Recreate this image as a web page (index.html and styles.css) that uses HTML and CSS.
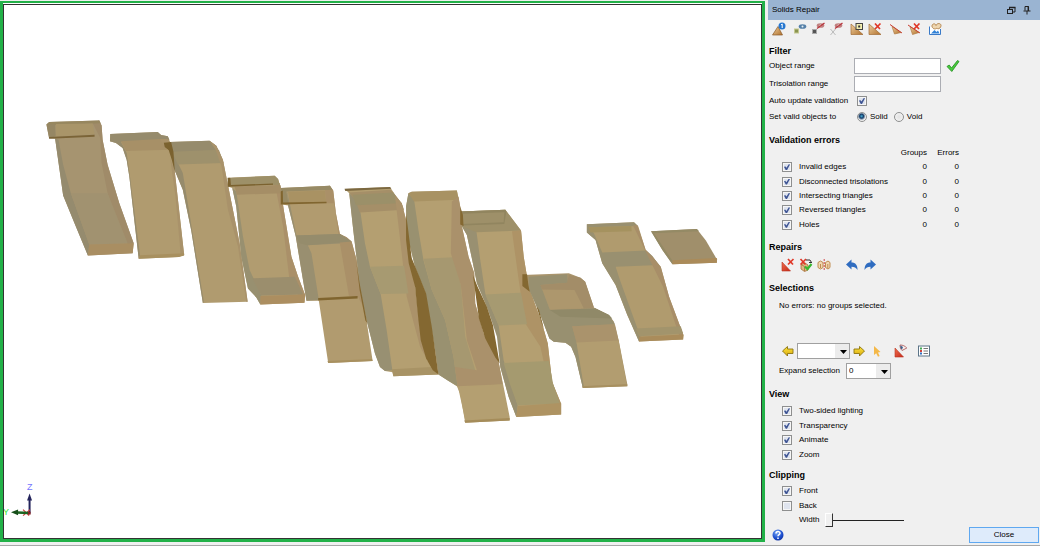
FILE: index.html
```html
<!DOCTYPE html>
<html lang="en">
<head>
<meta charset="utf-8">
<title>Solids Repair</title>
<link rel="stylesheet" href="styles.css">
</head>
<body>
<svg width="0" height="0" class="defs" aria-hidden="true">
  <defs>
    <linearGradient id="tan" x1="0" y1="0" x2="1" y2="1"><stop offset="0" stop-color="#efd0a0"/><stop offset="1" stop-color="#b0702c"/></linearGradient>
    <linearGradient id="gold" x1="0" y1="0" x2="0" y2="1"><stop offset="0" stop-color="#ffe640"/><stop offset="1" stop-color="#d9a90c"/></linearGradient>
    <linearGradient id="red" x1="0" y1="0" x2="1" y2="1"><stop offset="0" stop-color="#f07050"/><stop offset="1" stop-color="#c42818"/></linearGradient>
    <radialGradient id="ball" cx=".4" cy=".3" r=".8"><stop offset="0" stop-color="#7aa8f4"/><stop offset=".6" stop-color="#1d4fd0"/><stop offset="1" stop-color="#0b2a94"/></radialGradient>
    <g id="cross"><path d="M0 0L5 5.500M5.500 0L0 5.500" stroke="#e03828" stroke-width="1.700" fill="none"/></g>
    <g id="eye"><ellipse cx="3.500" cy="2.500" rx="3.800" ry="2.300"/><circle cx="3.500" cy="2.500" r="1" fill="#e8eef2"/></g>
    <g id="noeye" fill="#c08080"><ellipse cx="3.500" cy="2.500" rx="3.800" ry="2.300"/><circle cx="3.500" cy="2.500" r="1" fill="#eed"/><path d="M0 5.500L7.500 0" stroke="#b8343c" stroke-width="1.200"/></g>
  </defs>
</svg>
<div class="app">
  <main class="viewport">
    <svg class="scene" viewBox="4 4 757 534" role="img" aria-label="Solid model view">
      <g transform="translate(40 110) scale(.33333)">
        <path fill="#a69470" d="M22 45L30 37L180 33L187 48L190 90L205 165L240 280L283 400L280 430L146 437L110 350L72 257L48 87L30 86Z"/>
        <path fill="#958b6e" d="M48 87L58 90L72 165L95 250L150 404L146 437L110 350L72 257Z"/>
        <path fill="#a08b69" d="M160 40L180 33L187 48L190 90L205 165L240 280L283 400L265 402L230 320L205 250L187 160L183 85Z"/>
        <path fill="#a19270" d="M95 250L205 250L265 400L150 404Z"/>
        <path fill="#97875f" d="M22 45L30 37L180 33L184 41L28 48Z"/>
        <path fill="#968764" d="M22 45L48 43L50 80L30 86Z"/>
        <path fill="#a99569" d="M50 43L160 42L166 74L50 80Z"/>
        <path fill="#7b6437" d="M30 82L166 75L166 81L30 87Z"/>
        <path fill="#a98e62" d="M150 404L283 400L280 430L146 437Z"/>

        <path fill="#b09b6f" d="M212 95L213 73L355 67L365 76L385 80L397 110L406 185L434 435L418 441L298 446L270 200L262 150L250 115L230 100Z"/>
        <path fill="#968b6c" d="M212 95L213 73L355 67L365 76L385 80L390 90L245 97L262 130L272 200L302 436L298 446L270 200L262 150L250 115L230 100Z"/>
        <path fill="#a79067" d="M245 95L360 88L383 93L392 120L260 124Z"/>
        <path fill="#a9926a" d="M360 88L385 88L397 110L406 185L434 435L424 438L408 260L390 130Z"/>
        <path fill="#a8905f" d="M302 436L434 430L434 437L418 441L298 446Z"/>

        <path fill="#b09b6f" d="M375 100L390 97L510 93L530 108L550 150L560 200L600 400L624 575L490 579L455 360L430 240L405 180Z"/>
        <path fill="#968b6c" d="M390 97L510 93L530 108L538 125L400 128L430 190L448 300L493 575L490 579L455 360L430 240L405 180L392 120Z"/>
        <path fill="#9e916c" d="M398 126L538 120L552 160L415 164Z"/>
        <path fill="#a9926a" d="M510 93L530 108L550 150L560 200L600 400L624 575L620 575L595 410L565 300L546 170L528 120Z"/>
        <path fill="#7b622f" d="M373 99L395 97L402 126L406 185L397 150L388 122L376 112Z"/>
      </g>
      <g transform="translate(220 160) scale(.33333)">
        <path fill="#b19c70" d="M25 55L40 53L165 48L175 58L182 80L192 150L215 290L235 350L256 405L254 428L122 433L110 412L85 385L65 290L50 140L38 85L25 80Z"/>
        <path fill="#989070" d="M38 85L50 95L70 230L90 330L125 405L122 433L110 412L85 385L65 290L50 140Z"/>
        <path fill="#aa9069" d="M165 70L180 70L192 150L215 290L235 350L256 405L235 405L208 350L190 200Z"/>
        <path fill="#9d9068" d="M25 55L165 48L175 58L180 75L25 80Z"/>
        <path fill="#a58e66" d="M45 80L182 76L187 100L52 105Z"/>
        <path fill="#9b8e6d" d="M98 355L225 350L250 403L125 406Z"/>
        <path fill="#ac8e60" d="M122 408L256 403L254 428L122 433Z"/>
        <path fill="#7b622f" d="M24 54L32 54L34 76L160 71L160 75L25 81Z"/>

        <path fill="#b19b6f" d="M183 85L330 78L340 92L348 160L360 222L380 232L395 245L410 300L435 450L458 602L325 608L297 422L260 422L228 230L205 137L183 133Z"/>
        <path fill="#998f70" d="M200 86L205 125L205 137L228 230L260 422L297 420L275 280L264 256L390 249L385 238L360 222L230 227L212 140Z"/>
        <path fill="#aa9068" d="M315 80L330 78L340 92L348 160L360 222L380 232L395 245L410 300L435 450L414 410L387 407L360 250L342 130L318 130Z"/>
        <path fill="#958c6c" d="M228 227L360 222L395 245L264 256L240 250Z"/>
        <path fill="#978a65" d="M183 85L330 78L338 90L200 95L206 130L185 133Z"/>
        <path fill="#a99263" d="M205 96L315 92L319 128L210 130Z"/>
        <path fill="#80652f" d="M183 95L189 92L190 128L320 126L320 130L183 134ZM295 414L413 408L413 415L295 421Z"/>
        <path fill="#a8905f" d="M323 602L456 596L458 602L325 608Z"/>
      </g>
      <g transform="translate(340 170) scale(.33333)">
        <path fill="#b49f71" d="M15 58L150 52L165 75L185 100L198 150L205 230L220 290L225 350L240 480L262 570L295 613L160 618L158 606L135 602L120 590L105 550L80 450L60 350L40 180L28 70Z"/>
        <path fill="#989072" d="M28 70L50 90L62 130L75 220L90 290L122 372L140 480L157 600L135 602L120 590L105 550L80 450L60 350L40 180Z"/>
        <path fill="#a58f68" d="M28 68L152 60L165 75L185 100L192 120L60 128L45 90Z"/>
        <path fill="#9b9069" d="M38 75L160 68L178 100L48 106Z"/>
        <path fill="#ab926a" d="M165 80L185 100L198 150L205 230L220 290L225 350L240 480L262 570L240 530L200 380L185 250Z"/>
        <path fill="#a79a71" d="M90 290L192 287L205 370L122 372Z"/>
        <path fill="#a89365" d="M155 597L275 590L295 613L160 618Z"/>
        <path fill="#7b6840" d="M14 57L150 52L154 57L16 64Z"/>

        <path fill="#b49f71" d="M205 70L215 66L350 62L360 110L365 170L385 260L402 310L405 400L430 490L475 575L508 740L508 750L375 757L360 670L350 648L295 613L285 540L270 450L255 365L225 290L200 190L198 110Z"/>
        <path fill="#999170" d="M205 70L222 90L235 180L250 270L275 360L315 450L340 560L352 648L325 632L295 613L285 540L270 450L255 365L225 290L200 190L198 110Z"/>
        <path fill="#a89263" d="M205 70L215 66L350 62L355 90L222 95Z"/>
        <path fill="#a69870" d="M250 266L340 262L362 345L375 500L405 600L345 600L340 560L315 450L275 360Z"/>
        <path fill="#aa916b" d="M335 95L355 80L360 110L365 170L385 260L402 310L405 400L430 490L475 575L487 642L352 648L344 590L410 600L380 510L362 345L332 250Z"/>
        <path fill="#b49f71" d="M354 652L486 642L505 742L375 749Z"/>
        <path fill="#a58c5a" d="M372 750L508 743L508 750L375 757Z"/>
        <path fill="#846831" d="M198 130L215 265L238 320L258 370L275 470L295 613L278 600L258 565L242 510L235 450L225 350L206 280L198 210Z"/>
        <path fill="#846831" d="M49 275L60 345L82 460L76 450L59 360Z"/>
      </g>
      <g transform="translate(460 200) scale(.33333)">
        <path fill="#b49f71" d="M0 35L135 30L182 92L190 170L205 260L245 370L262 430L275 545L302 610L302 642L168 650L145 590L120 500L115 410L80 320L50 250L38 190L20 105L5 80Z"/>
        <path fill="#999071" d="M5 78L48 90L60 180L75 280L115 375L130 480L172 615L168 650L145 590L120 500L110 410L80 320L50 250L38 190L20 105Z"/>
        <path fill="#9e9069" d="M0 35L135 30L182 92L50 97L5 80Z"/>
        <path fill="#91855f" d="M0 35L135 30L138 36L132 72L5 77L5 72L130 67L132 37L5 42Z"/>
        <path fill="#ae9366" d="M155 94L182 92L190 170L205 260L245 370L262 430L275 545L302 610L280 610L260 530L240 440L195 370L175 240Z"/>
        <path fill="#a69a71" d="M75 283L182 278L200 372L115 376Z"/>
        <path fill="#a59a6f" d="M130 488L265 482L278 550L298 610L172 615L150 555Z"/>
        <path fill="#ae9362" d="M172 617L302 608L302 642L168 650Z"/>
        <path fill="#846831" d="M0 20L8 45L10 78L0 74ZM38 225L52 260L80 320L98 375L118 490L105 472L75 415L56 355Z"/>

        <path fill="#aa956d" d="M187 225L325 220L360 233L374 245L400 322L445 345L460 365L475 425L500 552L500 558L367 563L345 470L332 440L315 428L280 425L267 415L240 345L205 265L187 258Z"/>
        <path fill="#989070" d="M205 230L320 223L322 248L240 255L262 300L270 330L405 325L445 345L463 372L335 378L350 435L370 557L367 563L345 470L332 440L315 428L280 425L267 415L240 345L205 265Z"/>
        <path fill="#ad976d" d="M243 262L345 256L370 324L268 328Z"/>
        <path fill="#a38d68" d="M240 255L320 248L325 225L360 233L374 245L400 322L370 325L342 270L245 268Z"/>
        <path fill="#908968" d="M268 330L405 325L445 345L455 355L300 350Z"/>
        <path fill="#aa936c" d="M335 378L463 372L475 425L350 430Z"/>
        <path fill="#b29d70" d="M348 427L474 421L498 552L370 557Z"/>
        <path fill="#a8905f" d="M365 558L500 552L500 558L367 563Z"/>
        <path fill="#846831" d="M186 223L200 223L204 255L208 275L186 258ZM228 318L236 330L250 384L244 370Z"/>

        <path fill="#b09b6e" d="M379 73L520 67L533 80L555 150L575 170L600 200L625 290L668 405L667 418L535 424L500 345L465 255L425 190L405 120L379 98Z"/>
        <path fill="#999070" d="M379 73L520 67L532 78L385 82L400 100L425 158L557 152L575 168L595 195L465 200L478 240L540 412L535 424L500 345L465 255L425 190L405 120L379 98Z"/>
        <path fill="#a5925f" d="M383 82L512 78L513 94L390 98Z"/>
        <path fill="#a88e68" d="M517 76L530 76L555 150L575 170L600 200L625 290L668 405L655 405L607 260L560 165Z"/>
        <path fill="#a2946c" d="M525 385L660 378L667 400L535 408Z"/>
        <path fill="#aa8c5b" d="M535 410L668 403L667 418L535 424Z"/>

        <path fill="#a08f6b" d="M571 94L708 87L735 122L768 178L768 188L635 193L605 150Z"/>
        <path fill="#948a65" d="M571 94L708 87L715 94L580 100L636 184L635 193L605 150Z"/>
        <path fill="#ab8b59" d="M635 181L768 174L768 188L635 193Z"/>
      </g>
      <path stroke="#24245c" stroke-width="2" d="M30.500 513V498"/>
      <path fill="#24245c" d="M30.500 493L33 500H28Z"/>
      <path stroke="#d04040" stroke-width="1.200" fill="none" d="M24 509L30 515M24 515L31 509"/>
      <path stroke="#1c6420" stroke-width="2.400" d="M30 512.300L18 511.800"/>
      <path fill="#174f1a" d="M12 511.700L19 508.800V514.600Z"/>
      <rect x="29" y="511" width="2.500" height="3" fill="#8c2020"/>
      <text class="axis-z" x="28" y="489">Z</text>
      <text class="axis-y" x="4" y="514">Y</text>
    </svg>
  </main>

  <aside class="panel">
    <header class="titlebar">
      <h1>Solids Repair</h1>
      <button class="icon" aria-label="Float"><svg width="10" height="10"><path d="M3.500 4V2.500H9V7H7" fill="none" stroke="#222"/><path d="M3 2.500H9.500" stroke="#222" stroke-width="1.500"/><rect x="1.500" y="4.500" width="5" height="4" fill="none" stroke="#222"/></svg></button>
      <button class="icon" aria-label="Pin"><svg width="10" height="10"><path d="M3 5.500V1.500H6.500V5.500M1.500 6H8.500M5 6V9.500" fill="none" stroke="#222"/><path d="M6.300 1.500V6" stroke="#222" stroke-width="1.500"/></svg></button>
    </header>

    <div class="toolbar">
      <button class="icon" aria-label="Validate"><svg width="14" height="14"><path d="M.500 13L6 4.500L10.500 13Z" fill="url(#tan)" stroke="#8a5a28" stroke-width=".7"/><circle cx="10" cy="4" r="3.500" fill="#2878d0"/><path d="M9 3L10.200 2V6" stroke="#fff" fill="none"/></svg></button>
      <button class="icon gap" aria-label="Show"><svg width="14" height="14"><rect x="1.500" y="7" width="4" height="4" fill="#8a9450" stroke="#c4c890"/><use href="#eye" x="6" y="2" fill="#5580a8"/></svg></button>
      <button class="icon" aria-label="Hide"><svg width="14" height="14"><rect x="1.500" y="7.500" width="4" height="4" fill="#555" stroke="#aaa"/><use href="#noeye" x="6" y="1"/></svg></button>
      <button class="icon" aria-label="Hide all"><svg width="14" height="14"><path d="M1.500 7L6.500 13M6.500 7L1.500 13" stroke="#bbb"/><use href="#noeye" x="6" y="1"/></svg></button>
      <button class="icon gap" aria-label="Add triangle"><svg width="14" height="14"><path d="M1 2V12.500H13Z" fill="url(#tan)" stroke="#a06c34" stroke-width=".7"/><rect x="6" y="1.500" width="6.500" height="6" fill="#f4efb0" stroke="#444"/><rect x="8.200" y="3.500" width="2" height="2" fill="#333"/></svg></button>
      <button class="icon" aria-label="Delete triangle"><svg width="14" height="14"><path d="M1 2V12.500H13Z" fill="url(#tan)" stroke="#a06c34" stroke-width=".7"/><use href="#cross" x="7" y="1.500"/></svg></button>
      <button class="icon gap" aria-label="Select face"><svg width="14" height="14"><path d="M3 4.500L12 10.500L5.500 12Z" fill="url(#tan)" stroke="#b07a40" stroke-width=".7"/><path d="M1 2.500L13 11" stroke="#c83c30"/></svg></button>
      <button class="icon" aria-label="Delete face"><svg width="14" height="14"><path d="M3 4.500L12 10.500L5.500 12.500Z" fill="url(#tan)" stroke="#b07a40" stroke-width=".7"/><path d="M1 3L13 11" stroke="#c83c30"/><use href="#cross" x="7" y="1.500"/></svg></button>
      <button class="icon gap" aria-label="Load validation"><svg width="14" height="14"><path d="M1.500 4.500V12.500H12.500V7" fill="#fff" stroke="#3a7ac8"/><path d="M3 11.500L6.500 8L8.500 10L10 8.500L11.500 11.500Z" fill="#3484d8"/><path d="M4 4C4 1.500 7.500 1 8 3.500C9 .800 13 1 13 3.500C13 6 10 8 9 6C7 8 4 6.500 4 4Z" fill="#eed6b0" stroke="#b08048" stroke-width=".9"/></svg></button>
    </div>

    <section class="block">
      <h2>Filter</h2>
      <div class="field"><label for="obj">Object range</label><input class="text" id="obj" type="text"><button class="icon ok" aria-label="Apply"><svg width="14" height="14"><path d="M1 7.500L3.200 6L5.500 9L11.500 1.500L13 2.500L5.800 12.500Z" fill="#48cc3c" stroke="#228c20" stroke-width=".8"/></svg></button></div>
      <div class="field"><label for="tri">Trisolation range</label><input class="text" id="tri" type="text"></div>
      <div class="option"><label for="auto">Auto update validation</label><input id="auto" type="checkbox" checked></div>
      <div class="option"><span>Set valid objects to</span><label class="choice"><input type="radio" name="valid" checked>Solid</label><label class="choice"><input type="radio" name="valid">Void</label></div>
    </section>

    <section class="block">
      <h2>Validation errors</h2>
      <table class="errors">
        <thead><tr><td></td><th>Groups</th><th>Errors</th></tr></thead>
        <tbody>
          <tr><td><label class="tick"><input type="checkbox" checked>Invalid edges</label></td><td>0</td><td>0</td></tr>
          <tr><td><label class="tick"><input type="checkbox" checked>Disconnected trisolations</label></td><td>0</td><td>0</td></tr>
          <tr><td><label class="tick"><input type="checkbox" checked>Intersecting triangles</label></td><td>0</td><td>0</td></tr>
          <tr><td><label class="tick"><input type="checkbox" checked>Reversed triangles</label></td><td>0</td><td>0</td></tr>
          <tr><td><label class="tick"><input type="checkbox" checked>Holes</label></td><td>0</td><td>0</td></tr>
        </tbody>
      </table>
    </section>

    <section class="block">
      <h2>Repairs</h2>
      <div class="repairs">
        <button class="icon" aria-label="Delete error triangles"><svg width="14" height="14"><path d="M1 4V13H9.500Z" fill="url(#red)" stroke="#b83424" stroke-width=".6"/><use href="#cross" x="7" y="1"/></svg></button>
        <button class="icon" aria-label="Auto repair"><svg width="14" height="14"><path d="M2 6.500L6 5L9 7V12L5.500 13.500L2 11Z" fill="#e0b888" stroke="#a87038" stroke-width=".8"/><path d="M2 6.500L5.500 8.500V13" stroke="#a87038" fill="none" stroke-width=".8"/><use href="#cross" x="1.500" y="1"/><path d="M7 2H11L12.500 4.500M10 4.500H13" stroke="#333" fill="none"/><path d="M6 8.500L8.500 11L12.500 6" stroke="#38b830" stroke-width="2.200" fill="none"/></svg></button>
        <button class="icon" aria-label="Split"><svg width="14" height="14"><path d="M1 4.500L3.500 3L6 4.500V9.500L3.500 11L1 9.500ZM8.500 4.500L11 3L13 4.500V9.500L11 11L8.500 9.500ZM3.500 6V10M10.800 6V10" fill="#f0d8b4" stroke="#c08c50"/><path d="M7.200 1V13" stroke="#d04848" stroke-dasharray="2 1"/></svg></button>
        <button class="icon gap" aria-label="Undo"><svg width="14" height="14"><path d="M1 6.500L6.500 1.500V4.500C10.500 4.500 12.500 7 12.500 12C11 9.500 9.500 8.800 6.500 8.800V11.500Z" fill="#2f6cc0"/></svg></button>
        <button class="icon" aria-label="Redo"><svg width="14" height="14"><path d="M13 6.500L7.500 1.500V4.500C3.500 4.500 1.500 7 1.500 12C3 9.500 4.500 8.800 7.500 8.800V11.500Z" fill="#2f6cc0"/></svg></button>
      </div>
    </section>

    <section class="block tight">
      <h2>Selections</h2>
      <p class="message">No errors: no groups selected.</p>
      <div class="picker">
        <button class="icon" aria-label="Previous group"><svg width="14" height="14"><path d="M1.500 7L6.500 2.500V5H12V9.500H6.500V12Z" fill="url(#gold)" stroke="#8c7410" stroke-width=".9"/></svg></button>
        <span class="drop wide"><select aria-label="Group"><option></option></select></span>
        <button class="icon" aria-label="Next group"><svg width="14" height="14"><path d="M12.500 7L7.500 2.500V5H2V9.500H7.500V12Z" fill="url(#gold)" stroke="#8c7410" stroke-width=".9"/></svg></button>
        <button class="icon cursor" aria-label="Pick"><svg width="14" height="14"><path d="M4 2V11L6.200 9.300L8 12.800L9.600 12L8 8.600L10.500 8Z" fill="#f4b848"/></svg></button>
        <button class="icon" aria-label="View selection"><svg width="14" height="14"><path d="M1 4V13H9.500Z" fill="url(#red)" stroke="#b83424" stroke-width=".6"/><path d="M6 1C9 1 11 2 12.800 4L8 6.500C6.500 5 6 3 6 1Z" fill="#f6f0f0" stroke="#b06060" stroke-width=".9"/><path d="M6.500 1.500C6 3 6.500 4.500 8 5.500L9 3Z" fill="#3c5c88"/></svg></button>
        <button class="icon list" aria-label="Report"><svg width="14" height="14"><rect x="1.500" y="2" width="11" height="10" fill="#fff" stroke="#5c7488"/><path d="M3 4.500H5" stroke="#40a850" stroke-width="2"/><path d="M3 7H5" stroke="#d04038" stroke-width="2"/><path d="M3 9.500H5" stroke="#3070c0" stroke-width="2"/><path d="M6.500 4.500H11M6.500 7H11M6.500 9.500H11" stroke="#777"/></svg></button>
      </div>
      <div class="expand"><label for="exp">Expand selection</label><span class="drop"><select id="exp"><option>0</option></select></span></div>
    </section>

    <section class="block mid">
      <h2>View</h2>
      <div class="ticks">
        <label class="tick"><input type="checkbox" checked>Two-sided lighting</label>
        <label class="tick"><input type="checkbox" checked>Transparency</label>
        <label class="tick"><input type="checkbox" checked>Animate</label>
        <label class="tick"><input type="checkbox" checked>Zoom</label>
      </div>
    </section>

    <section class="block mid">
      <h2>Clipping</h2>
      <div class="ticks two">
        <label class="tick"><input type="checkbox" checked>Front</label>
        <label class="tick"><input type="checkbox">Back</label>
      </div>
      <div class="slide"><label for="width">Width</label><input id="width" type="range" min="0" max="100" value="0"></div>
    </section>

    <footer class="footer">
      <button class="icon" aria-label="Help"><svg width="14" height="14"><circle cx="7" cy="7" r="5.500" fill="url(#ball)"/><path d="M5 5.500C5 3 9 3 9 5.300C9 6.800 7 6.600 7 8.300M7 9.500V11" stroke="#fff" stroke-width="1.500" fill="none"/></svg></button>
      <button class="close">Close</button>
    </footer>
  </aside>
</div>
</body>
</html>
```
FILE: styles.css
```css
* { box-sizing: border-box; }
body {
  margin: 0;
  font: 8px/12px "Liberation Sans", Arial, sans-serif;
  color: #000;
  background: #f0f0f0;
}
.defs { position: absolute; }
.app {
  display: grid;
  grid-template-columns: 1fr 275px;
  min-height: 100vh;
  padding-bottom: 2px;
  border-bottom: 1px solid #a8a8a8;
}
.viewport {
  display: flex;
  margin: 1px 0;
  border: 3px solid #22b148;
  border-top-width: 2px;
  outline: 1px solid #333;
  outline-offset: -4px;
  background: #fff;
}
.scene { flex: 1; width: 100%; min-width: 0; }
.axis-z, .axis-y { font-size: 9px; }
.axis-z { fill: #7676ff; }
.axis-y { fill: #30e830; }

.panel { display: flex; flex-direction: column; padding-left: 4px; white-space: nowrap; }
h1, h2, p { margin: 0; }
h1 { flex: 1; font-size: 8px; font-weight: 400; }
h2 { font-size: 9px; line-height: 12px; font-weight: 700; }
button, input, select { font: inherit; color: inherit; margin: 0; }
.icon { display: flex; padding: 0; border: 0; background: none; }
.titlebar {
  display: flex;
  align-items: center;
  gap: 6px;
  height: 20px;
  margin-left: -1px;
  padding: 0 8px 0 4px;
  background: #9ab4d2;
}
.toolbar { display: flex; align-items: center; gap: 4px; height: 17px; padding-left: 3px; }
.toolbar .gap { margin-left: 3px; }

.block { margin-top: 9px; }
.toolbar + .block { margin-top: 8px; }
.block.tight { margin-top: 5px; }
.block.mid { margin-top: 7px; }

.field, .option { display: flex; align-items: center; }
.field { height: 18px; }
.option { height: 16px; }
.field label { width: 85px; }
.option > :first-child { width: 88px; }
.text { width: 87px; height: 16px; padding: 0 2px; border: 1px solid #abadb3; background: #fff; }
.ok { margin-left: 5px; }
.choice { display: flex; align-items: center; gap: 3px; margin-right: 6px; }

input[type="checkbox"] {
  appearance: none;
  display: block;
  width: 10px;
  height: 10px;
  border: 1px solid #8e8f8f;
  background: #dfe4ee;
  box-shadow: inset 0 0 0 1px #f6f6f6;
}
input[type="checkbox"]:checked::after {
  content: "";
  display: block;
  width: 6px;
  height: 6px;
  margin: 1px;
  background: #3f5594;
  clip-path: polygon(0 45%, 20% 35%, 40% 60%, 80% 0, 100% 5%, 50% 100%, 30% 100%);
}
input[type="radio"] {
  appearance: none;
  width: 10px;
  height: 10px;
  border: 1px solid #8e8f8f;
  border-radius: 50%;
  background: radial-gradient(#e2e2e2, #f8f8f8);
}
input[type="radio"]:checked { background: radial-gradient(circle at 45% 40%, #48b0d8 0, #143c68 2px, #f0f0f0 4px); }

.errors { width: 190px; height: 86px; border-collapse: collapse; table-layout: fixed; }
.errors td, .errors th { padding: 0; width: 32px; text-align: right; font-weight: 400; }
.errors td:first-child { width: auto; }
.errors thead tr { height: 14px; }
.tick { display: flex; align-items: center; gap: 7px; padding-left: 13px; }
.ticks { display: grid; grid-auto-rows: 1fr; height: 58px; margin-top: 4px; }
.ticks.two { height: 29px; margin-top: 3px; }

.repairs { display: flex; align-items: center; gap: 4px; height: 24px; padding-left: 12px; }
.repairs .gap { margin-left: 10px; }
.message { padding: 6px 0 6px 10px; margin-bottom: 23px; }
.picker, .expand { display: flex; align-items: center; height: 20px; }
.picker { padding-left: 12px; gap: 2px; }
.cursor { margin-left: 2px; }
.cursor + .icon { margin-left: 8px; }
.list { margin-left: 7px; }
.expand { padding-left: 10px; }
.expand label { width: 67px; }
.drop { position: relative; display: flex; width: 45px; height: 16px; }
.drop.wide { width: 53px; }
.drop select {
  appearance: none;
  width: 100%;
  padding: 0 2px;
  border: 1px solid #a0a0a0;
  border-radius: 0;
  background: linear-gradient(90deg, #fff calc(100% - 14px), #ececec calc(100% - 14px));
}
.drop::after {
  content: "";
  position: absolute;
  right: 3px;
  top: 7px;
  width: 7px;
  height: 4px;
  background: #000;
  clip-path: polygon(0 0, 100% 0, 50% 100%);
  pointer-events: none;
}

.slide { display: flex; align-items: center; height: 14px; padding-left: 30px; }
.slide label { width: 26px; }
.slide input { appearance: none; width: 79px; height: 14px; background: linear-gradient(#222, #222) center / 100% 1px no-repeat; }
.slide input::-webkit-slider-thumb {
  appearance: none;
  width: 8px;
  height: 14px;
  border: 1px solid #fff;
  border-right-color: #333;
  border-bottom-color: #333;
  background: #f0f0f0;
}
.footer { display: flex; align-items: center; justify-content: space-between; padding: 0 1px 0 2px; }
.close { width: 70px; height: 16px; padding: 0; border: 1px solid #5fa8f0; background: #deebfb; }
```
